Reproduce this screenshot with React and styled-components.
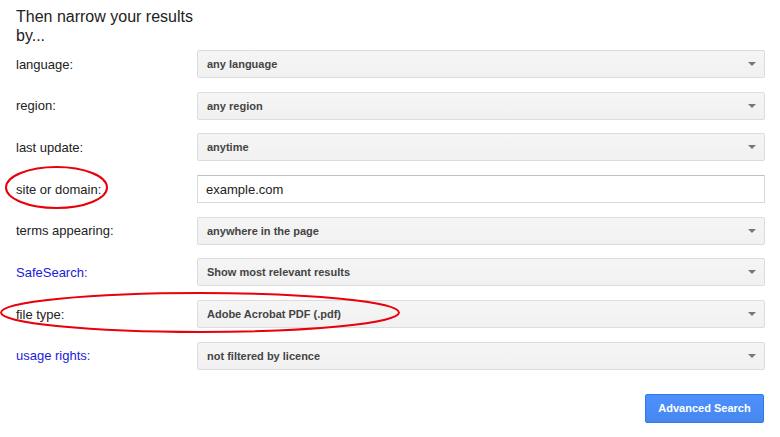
import React from 'react';
import styled, { createGlobalStyle } from 'styled-components';

const GlobalStyle = createGlobalStyle`
  html, body {
    margin: 0;
    padding: 0;
    background: #fff;
  }
  body {
    font-family: Arial, "Liberation Sans", sans-serif;
    color: #222;
  }
`;

const rows = [
  { label: 'language:', value: 'any language' },
  { label: 'region:', value: 'any region' },
  { label: 'last update:', value: 'anytime' },
  { label: 'site or domain:', value: 'example.com', input: true },
  { label: 'terms appearing:', value: 'anywhere in the page' },
  { label: 'SafeSearch:', value: 'Show most relevant results', link: true },
  { label: 'file type:', value: 'Adobe Acrobat PDF (.pdf)' },
  { label: 'usage rights:', value: 'not filtered by licence', link: true },
];

function App() {
  return (
    <Page>
      <GlobalStyle />
      <Title>Then narrow your results by...</Title>
      <Form>
        {rows.map((row) => (
          <React.Fragment key={row.label}>
            <Label $link={row.link}>{row.label}</Label>
            {row.input ? (
              <TextBox defaultValue={row.value} />
            ) : (
              <Dropdown>
                <span>{row.value}</span>
                <Arrow />
              </Dropdown>
            )}
          </React.Fragment>
        ))}
        <SearchButton>Advanced Search</SearchButton>
      </Form>
      <Marks width="780" height="437">
        <ellipse cx="56.5" cy="187.5" rx="50.5" ry="20.5" />
        <ellipse cx="200" cy="312.5" rx="199" ry="19.5" />
      </Marks>
    </Page>
  );
}

export default App;

const Page = styled.div`
  position: relative;
  width: 780px;
  height: 437px;
  box-sizing: border-box;
  padding: 7px 15px 0 16px;
  overflow: hidden;
`;

const Title = styled.h2`
  margin: 0;
  width: 185px;
  font-size: 16px;
  font-weight: normal;
  line-height: 19px;
  color: #222;
`;

const Form = styled.div`
  display: grid;
  grid-template-columns: 181px 1fr;
  grid-auto-rows: 28px;
  row-gap: 13.7px;
  align-items: center;
  margin-top: 5px;
`;

const Label = styled.div`
  font-size: 13px;
  color: ${(p) => (p.$link ? '#1a1adb' : '#222')};
`;

const Dropdown = styled.div`
  height: 28px;
  box-sizing: border-box;
  display: flex;
  align-items: center;
  justify-content: space-between;
  padding: 0 6px 0 9px;
  border: 1px solid #dcdcdc;
  border-radius: 2px;
  background: linear-gradient(#f5f5f5, #f1f1f1);
  font-size: 11px;
  font-weight: bold;
  color: #444;
`;

const Arrow = styled.i`
  width: 0;
  height: 0;
  border-left: 4px solid transparent;
  border-right: 4px solid transparent;
  border-top: 4px solid #777;
  margin-right: 2px;
`;

const TextBox = styled.input`
  height: 28px;
  box-sizing: border-box;
  width: 100%;
  margin: 0;
  padding: 0 8px;
  border: 1px solid #d9d9d9;
  border-top-color: #c0c0c0;
  border-radius: 1px;
  font-family: Arial, "Liberation Sans", sans-serif;
  font-size: 13px;
  color: #222;
  outline: none;
`;

const SearchButton = styled.button`
  grid-column: 2;
  justify-self: end;
  align-self: start;
  margin: 10px 1px 0 0;
  width: 119px;
  height: 29px;
  border: 1px solid #3079ed;
  border-radius: 2px;
  background: linear-gradient(#4d90fe, #4787ed);
  color: #fff;
  font-family: Arial, "Liberation Sans", sans-serif;
  font-size: 11px;
  font-weight: bold;
`;

const Marks = styled.svg`
  position: absolute;
  left: 0;
  top: 0;
  pointer-events: none;

  ellipse {
    fill: none;
    stroke: #e8000b;
    stroke-width: 2;
  }
`;
